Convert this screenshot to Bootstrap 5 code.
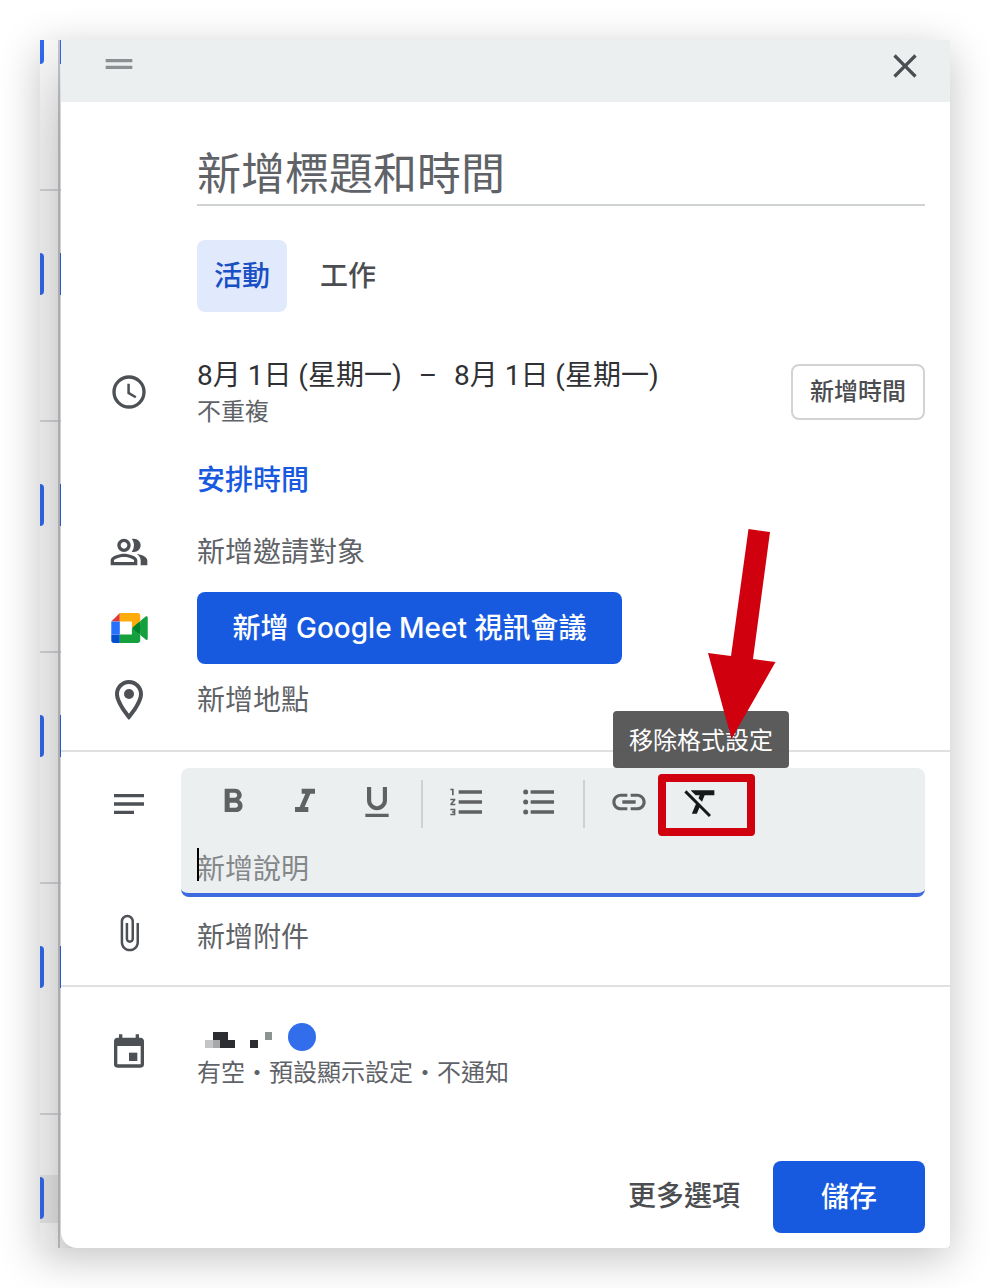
<!DOCTYPE html>
<html lang="zh-Hant">
<head>
<meta charset="utf-8">
<meta name="viewport" content="width=device-width, initial-scale=1">
<title>新增活動</title>
<link rel="stylesheet" href="https://cdn.jsdelivr.net/npm/bootstrap@5.3.0/dist/css/bootstrap.min.css">
<style>
  :root { --ink: #303134; --soft: #5f6368; --icon: #4d5156; --blue: #185adf; --pale: #ebeff0; --rule: #e0e0e0; --mark: #d0000e; }
  body { font-family: Roboto, "Noto Sans CJK TC", sans-serif; font-size: 28px; line-height: 40px; color: var(--soft); background: #fff; padding: 40px; }
  svg { display: block; fill: currentColor; flex: none; }
  .window-shot { box-shadow: 0 10px 40px rgba(0,0,0,.24); background: #fff; }
  .window-body { min-width: 0; }

  /* strip of the calendar grid behind the dialog */
  .week-strip { width: 21px; background: #fff; overflow: hidden; height: 0; min-height: 100%; }
  .day-cells { width: 20px; flex: none; border-right: 2px solid #cdced4; }
  .slot { height: 231px; flex: none; border-bottom: 2px solid #dadce0; padding-top: 62px; }
  .slot-first { height: 151px; padding-top: 0; }
  .slot-last { flex: 1 1 0; min-height: 0; border-bottom: 0; padding-top: 60px; }
  .chip { height: 42px; width: 4px; background: #336df4; border-radius: 0 8px 8px 0; }
  .slot-first .chip { height: 24px; border-radius: 0 0 8px 0; }
  .now-box { background: #eee; height: 48px; padding-top: 2px; }

  .event-dialog { min-width: 0; z-index: 1; background: #fff; border-radius: 0 0 4px 16px; box-shadow: 0 48px 76px 6px rgba(0,0,0,.14), 0 18px 92px 16px rgba(0,0,0,.12), 0 22px 30px -14px rgba(0,0,0,.2); }
  .dialog-bar { height: 62px; background: var(--pale); padding: 4px 25px 0 38px; color: #8b8f92; }
  .dialog-bar button { color: #4b4d50; }
  .plain { border: 0; background: none; padding: 2px 0 0; color: inherit; text-align: left; }
  .line { display: flex; align-items: center; min-height: 72px; padding-right: 25px; }
  .gutter { width: 136px; flex: none; display: flex; justify-content: center; align-items: center; color: var(--icon); }
  .indent { margin-left: 136px; margin-right: 25px; }

  .title-box { height: 64px; margin-top: 40px; border: 0; border-bottom: 2px solid #d0d3d4; border-radius: 0; padding: 4px 0 0; font-size: 44px; background: none; }
  .title-box::placeholder { color: var(--soft); opacity: 1; }
  .tabs { margin-top: 34px; margin-bottom: 44px; }
  .btn { --bs-btn-font-size: 28px; --bs-btn-line-height: 40px; --bs-btn-padding-y: 16px; --bs-btn-padding-x: 17px; --bs-btn-border-radius: 8px; --bs-btn-border-width: 0; --bs-btn-font-weight: 500; --bs-btn-color: #4b4d50; }
  .btn-tab { --bs-btn-padding-y: 17px; padding-bottom: 15px; }
  .btn-tab.active { --bs-btn-active-bg: #e1eafd; --bs-btn-active-color: #1b50c4; }
  .btn-fill { --bs-btn-bg: var(--blue); --bs-btn-color: #fff; --bs-btn-hover-bg: #1450c8; --bs-btn-hover-color: #fff; --bs-btn-padding-x: 32px; font-family: Inter, "Noto Sans CJK TC", sans-serif; }
  .btn-meet { min-width: 425px; }
  .btn-save { --bs-btn-padding-x: 48px; }
  .btn-time { --bs-btn-font-size: 24px; --bs-btn-border-width: 2px; --bs-btn-border-color: #d2d3d5; --bs-btn-padding-x: 17px; --bs-btn-padding-y: 6px; white-space: nowrap; }
  .dates { color: var(--ink); }
  .dates span { margin: 0 10px; }
  .note { font-size: 24px; line-height: 32px; }
  .find-time { color: var(--blue); font-weight: 500; text-decoration: none; padding-top: 2px; }
  .rule { border-top: 2px solid var(--rule); }
  .rule-place { margin-top: 14px; margin-bottom: 16px; }
  .rule-file { margin-top: 12px; margin-bottom: 30px; }

  .editor { background: var(--pale); border-radius: 8px; border-bottom: 4px solid #3d6ade; margin-left: -16px; }
  .tools { height: 68px; padding-left: 16px; color: #606162; }
  .tool { width: 72px; height: 68px; border: 0; background: none; padding: 0; display: flex; justify-content: center; align-items: center; color: inherit; }
  .tool-rule { width: 2px; height: 48px; margin: 0 8px 8px; align-self: flex-end; background: #ccd1d3; }
  .tool-on { color: #17181a; }
  .tip { left: 50%; bottom: 68px; transform: translateX(-50%); background: rgba(82,82,82,.95); color: #fff; font-size: 24px; line-height: 53px; padding: 4px 16px 0; border-radius: 4px; white-space: nowrap; z-index: 2; }
  .frame-mark { left: -7px; right: -18px; top: 6px; bottom: 0; border: 8px solid var(--mark); border-radius: 4px; pointer-events: none; }
  .arrow-mark { left: 43px; bottom: 97px; fill: var(--mark); z-index: 3; pointer-events: none; }
  .note-box { display: block; width: 100%; height: 57px; border: 0; background: none; padding: 14px 16px 0; resize: none; overflow: hidden; color: var(--ink); outline: 0; }
  .note-box::placeholder { color: #85888a; opacity: 1; }
  .caret { left: 16px; top: 12px; width: 2px; height: 33px; background: #000; }
  .owner { height: 40px; gap: 15px; padding-left: 8px; }
  .owner svg { margin-top: 6px; }
  .dot { width: 28px; height: 28px; border-radius: 50%; background: #326eeb; }
  .foot { margin-top: 72px; padding: 0 25px 15px; gap: 16px; }
</style>
</head>
<body>
<main class="window-shot d-flex">
  <div class="window-body d-flex overflow-hidden flex-fill">
    <div class="week-strip d-flex" aria-hidden="true">
      <div class="day-cells d-flex flex-column">
        <div class="slot slot-first"><div class="chip"></div></div>
        <div class="slot"><div class="chip"></div></div>
        <div class="slot"><div class="chip"></div></div>
        <div class="slot"><div class="chip"></div></div>
        <div class="slot"><div class="chip"></div></div>
        <div class="slot-last"><div class="now-box"><div class="chip"></div></div></div>
      </div>
      <div class="d-flex flex-column flex-fill">
        <div class="slot slot-first"><div class="chip"></div></div>
        <div class="slot"><div class="chip"></div></div>
        <div class="slot"><div class="chip"></div></div>
        <div class="slot"><div class="chip"></div></div>
        <div class="slot"><div class="chip"></div></div>
      </div>
    </div>

  <form class="event-dialog flex-fill position-relative" role="dialog" aria-label="新增活動">
    <div class="dialog-bar d-flex justify-content-between align-items-start">
      <svg width="40" height="40" viewBox="0 0 24 24"><path d="M20 9H4v2h16V9zM4 15h16v-2H4v2z"/></svg>
      <button type="button" class="plain" aria-label="關閉"><svg width="40" height="40" viewBox="0 0 24 24"><path d="M19 6.41L17.59 5 12 10.59 6.41 5 5 6.41 10.59 12 5 17.59 6.41 19 12 13.41 17.59 19 19 17.59 13.41 12z"/></svg></button>
    </div>

    <div class="indent">
      <input type="text" class="title-box w-100 d-block" placeholder="新增標題和時間" aria-label="新增標題和時間">
      <div class="tabs d-flex gap-3">
        <button type="button" class="btn btn-tab active">活動</button>
        <button type="button" class="btn btn-tab">工作</button>
      </div>
    </div>

    <div class="line mb-3">
      <div class="gutter"><svg width="40" height="40" viewBox="0 0 24 24"><path d="M12 2a10 10 0 1 0 0 20 10 10 0 0 0 0-20zm0 18a8 8 0 1 1 0-16 8 8 0 0 1 0 16z"/><path d="M12.5 7H11v6l4.7 2.8.8-1.3-4-2.3z"/></svg></div>
      <div class="flex-fill">
        <div class="dates">8月 1日 (星期一) <span>–</span> 8月 1日 (星期一)</div>
        <div class="note">不重複</div>
      </div>
      <button type="button" class="btn btn-time">新增時間</button>
    </div>

    <div class="line"><div class="gutter"></div><a href="#" class="find-time">安排時間</a></div>

    <div class="line mb-1">
      <div class="gutter"><svg width="40" height="40" viewBox="0 0 24 24"><path fill-rule="evenodd" d="M15 8c0-1.42-.5-2.73-1.33-3.76.42-.14.86-.24 1.33-.24 2.21 0 4 1.79 4 4s-1.79 4-4 4c-.43 0-.84-.09-1.23-.21l-.1-.03A5.98 5.98 0 0 0 15 8zm1.66 5.13C18.03 14.06 19 15.32 19 17v3h4v-3c0-2.18-3.58-3.47-6.34-3.87zM9 6c-1.1 0-2 .9-2 2s.9 2 2 2 2-.9 2-2-.9-2-2-2zm0 9c-2.7 0-5.8 1.29-6 2.01V18h12v-1c-.2-.71-3.3-2-6-2zM9 4c2.21 0 4 1.79 4 4s-1.79 4-4 4-4-1.79-4-4 1.79-4 4-4zm0 9c2.67 0 8 1.34 8 4v3H1v-3c0-2.66 5.33-4 8-4z"/></svg></div>
      <button type="button" class="plain">新增邀請對象</button>
    </div>

    <div class="line">
      <div class="gutter"><svg width="37" height="30" viewBox="0 0 87.5 72"><path fill="#00832d" d="M49.5 36l8.53 9.75 11.47 7.33 2-17.02-2-16.64-11.69 6.44z"/><path fill="#0050d0" d="M0 51.5V66c0 3.3 2.7 6 6 6h14.5V51.5z"/><path fill="#e03a35" d="M20.5 0L0 20.5h20.5z"/><path fill="#2672fc" d="M20.5 20.5H0v31h20.5z"/><path fill="#14a03c" d="M82.6 8.68L69.5 19.42v33.66l13.16 10.79c1.97 1.54 4.85.13 4.85-2.37V11c0-2.53-2.95-3.92-4.91-2.32zM49.5 36v15.5h-29V72h43c3.3 0 6-2.7 6-6V53.08z"/><path fill="#ffac0a" d="M63.5 0h-43v20.5h29V36l20-16.57V6c0-3.3-2.7-6-6-6z"/></svg></div>
      <button type="button" class="btn btn-fill btn-meet">新增 Google Meet 視訊會議</button>
    </div>

    <div class="line">
      <div class="gutter"><svg width="48" height="48" viewBox="0 0 24 24"><path fill-rule="evenodd" d="M12 2C8.13 2 5 5.13 5 9c0 5.25 7 13 7 13s7-7.75 7-13c0-3.87-3.13-7-7-7zM7 9c0-2.76 2.24-5 5-5s5 2.24 5 5c0 2.88-2.88 7.19-5 9.88C9.92 16.21 7 11.85 7 9z"/><circle cx="12" cy="9" r="2.5"/></svg></div>
      <button type="button" class="plain">新增地點</button>
    </div>

    <div class="rule rule-place"></div>

    <div class="line align-items-start mb-1">
      <div class="gutter line pe-0"><svg width="40" height="40" viewBox="0 0 24 24"><path d="M3 11h18v2H3zM3 16h12v2H3zM3 6h18v2H3z"/></svg></div>
      <div class="editor flex-fill">
        <div class="tools d-flex">
          <button type="button" class="tool" aria-label="粗體"><svg width="40" height="40" viewBox="0 0 24 24"><path d="M15.6 10.79c.97-.67 1.65-1.77 1.65-2.79 0-2.26-1.75-4-4-4H7v14h7.04c2.09 0 3.71-1.7 3.71-3.79 0-1.52-.86-2.82-2.15-3.42zM10 6.5h3c.83 0 1.5.67 1.5 1.5s-.67 1.5-1.5 1.5h-3v-3zm3.5 9H10v-3h3.5c.83 0 1.5.67 1.5 1.5s-.67 1.5-1.5 1.5z"/></svg></button>
          <button type="button" class="tool" aria-label="斜體"><svg width="40" height="40" viewBox="0 0 24 24"><path d="M10 4v3h2.21l-3.42 8H6v3h8v-3h-2.21l3.42-8H18V4z"/></svg></button>
          <button type="button" class="tool" aria-label="底線"><svg width="40" height="40" viewBox="0 0 24 24"><path d="M12 17c3.31 0 6-2.69 6-6V3h-2.5v8c0 1.93-1.57 3.5-3.5 3.5S8.5 12.93 8.5 11V3H6v8c0 3.31 2.69 6 6 6zm-7 2v2h14v-2H5z"/></svg></button>
          <span class="tool-rule"></span>
          <button type="button" class="tool" aria-label="編號清單"><svg width="40" height="40" viewBox="0 0 24 24"><path d="M2 17h2v.5H3v1h1v.5H2v1h3v-4H2v1zm1-9h1V4H2v1h1v3zm-1 3h1.8L2 13.1v.9h3v-1H3.2L5 10.9V10H2v1zm5-6v2h14V5H7zm0 14h14v-2H7v2zm0-6h14v-2H7v2z"/></svg></button>
          <button type="button" class="tool" aria-label="項目符號清單"><svg width="40" height="40" viewBox="0 0 24 24"><path d="M7 19h14v-2H7v2zm0-6h14v-2H7v2zm0-8v2h14V5H7z"/><circle cx="4" cy="6" r="1.5"/><circle cx="4" cy="12" r="1.5"/><circle cx="4" cy="18" r="1.5"/></svg></button>
          <span class="tool-rule"></span>
          <button type="button" class="tool" aria-label="插入連結"><svg width="40" height="40" viewBox="0 0 24 24"><path d="M3.9 12c0-1.71 1.39-3.1 3.1-3.1h4V7H7c-2.76 0-5 2.24-5 5s2.24 5 5 5h4v-1.9H7c-1.71 0-3.1-1.39-3.1-3.1zM8 13h8v-2H8v2zm9-6h-4v1.9h4c1.71 0 3.1 1.39 3.1 3.1s-1.39 3.1-3.1 3.1h-4V17h4c2.76 0 5-2.24 5-5s-2.24-5-5-5z"/></svg></button>
          <div class="position-relative">
            <button type="button" class="tool tool-on" aria-describedby="clear-tip" aria-label="移除格式設定"><svg width="40" height="40" viewBox="0 0 24 24"><path d="M3.27 5L2 6.27l6.97 6.97L6.5 19h3l1.57-3.66L16.73 21 18 19.73 3.55 5.27 3.27 5zM6 5v.18L8.82 8h2.4l-.72 1.68 2.1 2.1L14.21 8H20V5H6z"/></svg></button>
            <div class="tip position-absolute" id="clear-tip" role="tooltip">移除格式設定</div>
            <div class="frame-mark position-absolute"></div>
            <svg class="arrow-mark position-absolute" width="68" height="210" viewBox="0 0 68 210"><path d="M40.500 0L62 3 45 130 67.500 133 23.500 210 0 124 23 127z"/></svg>
          </div>
        </div>
        <div class="position-relative">
          <textarea class="note-box" placeholder="新增說明" aria-label="新增說明"></textarea>
          <span class="caret position-absolute"></span>
        </div>
      </div>
    </div>

    <div class="line">
      <div class="gutter pb-2"><svg width="40" height="40" viewBox="0 0 24 24"><path d="M16.5 6v11.5c0 2.21-1.79 4-4 4s-4-1.79-4-4V5c0-1.38 1.12-2.5 2.5-2.5s2.5 1.12 2.5 2.5v10.500c0 .55-.45 1-1 1s-1-.45-1-1V6H10v9.500c0 1.38 1.12 2.5 2.5 2.5s2.5-1.12 2.5-2.5V5c0-2.21-1.79-4-4-4S7 2.79 7 5v12.500c0 3.04 2.46 5.5 5.5 5.5s5.5-2.46 5.5-5.5V6h-1.500z"/></svg></div>
      <button type="button" class="plain">新增附件</button>
    </div>

    <div class="rule rule-file"></div>

    <div class="line">
      <div class="gutter pb-1"><svg width="40" height="40" viewBox="0 0 24 24"><path fill-rule="evenodd" d="M19 4h-1V2h-2v2H8V2H6v2H5c-1.110 0-2 .9-2 2v14a2 2 0 0 0 2 2h14a2 2 0 0 0 2-2V6c0-1.100-.9-2-2-2zm0 16H5V9h14v11z"/><path d="M12 13h5v5h-5z"/></svg></div>
      <div>
        <div class="owner d-flex align-items-center">
          <svg width="68" height="16" viewBox="0 0 68 16" shape-rendering="crispEdges"><path fill="#2b2d31" d="M8 0h15v8h7v8H15V8H8zM45 8h8v8h-8z"/><path fill="#c4c5c7" d="M0 8h8v8H0z"/><path fill="#a7a8aa" d="M8 8h7v8H8z"/><path fill="#8d9292" d="M60 0h7v8h-7z"/></svg>
          <span class="dot"></span>
        </div>
        <div class="note">有空・預設顯示設定・不通知</div>
      </div>
    </div>

    <div class="foot d-flex justify-content-end">
      <button type="button" class="btn">更多選項</button>
      <button type="submit" class="btn btn-fill btn-save">儲存</button>
    </div>
  </form>
  </div>
</main>
<script src="https://cdn.jsdelivr.net/npm/bootstrap@5.3.0/dist/js/bootstrap.bundle.min.js"></script>
</body>
</html>
